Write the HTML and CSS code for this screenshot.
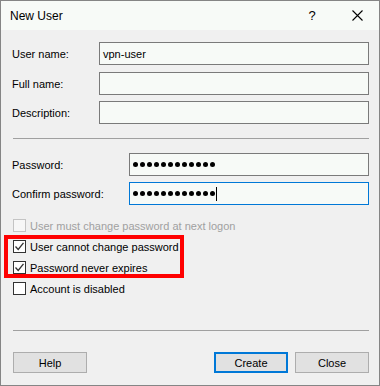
FILE: index.html
```html
<!DOCTYPE html>
<html>
<head>
<meta charset="utf-8">
<link rel="stylesheet" href="styles.css">
</head>
<body>
<div class="window">
  <div class="titlebar">
    <span class="title">New User</span>
    <span class="help-glyph">?</span>
    <svg class="close-x" width="11" height="11" viewBox="0 0 11 11"><path d="M0.5 0.5 L10.5 10.5 M10.5 0.5 L0.5 10.5" stroke="#000" stroke-width="1.1" fill="none"/></svg>
  </div>
  <div class="content">
    <div class="form-group">
      <div class="row"><span class="lbl">User name:</span><div class="field">vpn-user</div></div>
      <div class="row"><span class="lbl">Full name:</span><div class="field"></div></div>
      <div class="row"><span class="lbl">Description:</span><div class="field"></div></div>
    </div>
    <div class="sep"></div>
    <div class="form-group pw-group">
      <div class="row"><span class="lbl wide">Password:</span><div class="field"><span class="dots"><i></i><i></i><i></i><i></i><i></i><i></i><i></i><i></i><i></i><i></i><i></i><i></i></span></div></div>
      <div class="row"><span class="lbl wide">Confirm password:</span><div class="field focused"><span class="dots"><i></i><i></i><i></i><i></i><i></i><i></i><i></i><i></i><i></i><i></i><i></i><i></i></span><span class="caret"></span></div></div>
    </div>
    <div class="checks">
      <div class="chk disabled"><span class="box"></span><span>User must change password at next logon</span></div>
      <div class="chk"><span class="box"><svg width="11" height="11" viewBox="0 0 11 11"><path d="M1.5 5.5 L4.2 8.5 L9.5 1.8" stroke="#333" stroke-width="1.3" fill="none"/></svg></span><span>User cannot change password</span></div>
      <div class="chk"><span class="box"><svg width="11" height="11" viewBox="0 0 11 11"><path d="M1.5 5.5 L4.2 8.5 L9.5 1.8" stroke="#333" stroke-width="1.3" fill="none"/></svg></span><span>Password never expires</span></div>
      <div class="chk"><span class="box"></span><span>Account is disabled</span></div>
    </div>
    <div class="sep bottom-sep"></div>
    <div class="buttons">
      <button class="btn">Help</button>
      <span class="spacer"></span>
      <button class="btn default">Create</button>
      <button class="btn">Close</button>
    </div>
  </div>
  <div class="highlight"></div>
</div>
</body>
</html>
```

FILE: styles.css
```css
* { box-sizing: border-box; }
html, body { margin: 0; padding: 0; background: #f0f0f0; }
body {
  font-family: "Liberation Sans", Arial, sans-serif;
  font-size: 11px;
  color: #000;
}
.window {
  position: relative;
  width: 380px;
  height: 386px;
  border: 1px solid #858585;
  background: #f0f0f0;
  display: flex;
  flex-direction: column;
}
.titlebar {
  height: 29px;
  background: #f7faf7;
  display: flex;
  align-items: center;
  padding: 0 16px 0 9px;
}
.title { flex: 1; font-size: 12px; }
.help-glyph {
  width: 12px;
  text-align: center;
  font-size: 13px;
  margin-right: 34px;
}
.close-x { display: block; }
.content {
  flex: 1;
  padding: 12px 10px 0 11px;
  display: flex;
  flex-direction: column;
}
.form-group { display: flex; flex-direction: column; gap: 6px; }
.form-group .row:nth-child(2) { margin-top: 1px; }
.pw-group .row:nth-child(2) { margin-top: 0; }
.row { display: flex; align-items: center; }
.lbl { width: 87px; }
.lbl.wide { width: 117px; }
.field {
  flex: 1;
  height: 23px;
  border: 1px solid #7a7a7a;
  background: #f7faf7;
  padding: 0 3px;
  display: flex;
  align-items: center;
}
.field.focused { border-color: #0078d7; }
.dots { display: flex; gap: 2px; }
.dots i {
  display: block;
  width: 5px;
  height: 5px;
  border-radius: 50%;
  background: #000;
}
.caret {
  width: 1px;
  height: 14px;
  background: #000;
  margin-left: 1px;
}
.sep {
  height: 1px;
  background: #a0a0a0;
  margin: 14px 0 14px 1px;
}
.checks {
  margin-top: 10px;
  display: flex;
  flex-direction: column;
}
.chk {
  height: 21px;
  display: flex;
  align-items: center;
  gap: 4px;
  padding-left: 1px;
}
.box {
  width: 13px;
  height: 13px;
  border: 1px solid #333;
  background: #fff;
  display: flex;
  align-items: center;
  justify-content: center;
}
.chk.disabled { color: #a0a0a0; }
.chk.disabled .box { border-color: #c4c4c4; background: #f7f7f7; }
.bottom-sep { margin: 31px 0 21px 1px; }
.buttons { display: flex; gap: 7px; padding-left: 1px; }
.spacer { flex: 1; }
.btn {
  width: 74px;
  height: 21px;
  border: 1px solid #adadad;
  background: #e1e1e1;
  font-family: "Liberation Sans", Arial, sans-serif;
  font-size: 11px;
  color: #000;
  padding: 0;
}
.btn.default { border: 2px solid #0078d7; }
.highlight {
  position: absolute;
  left: 3px;
  top: 234px;
  width: 180px;
  height: 43px;
  border: 4px solid #ff0000;
}
```
